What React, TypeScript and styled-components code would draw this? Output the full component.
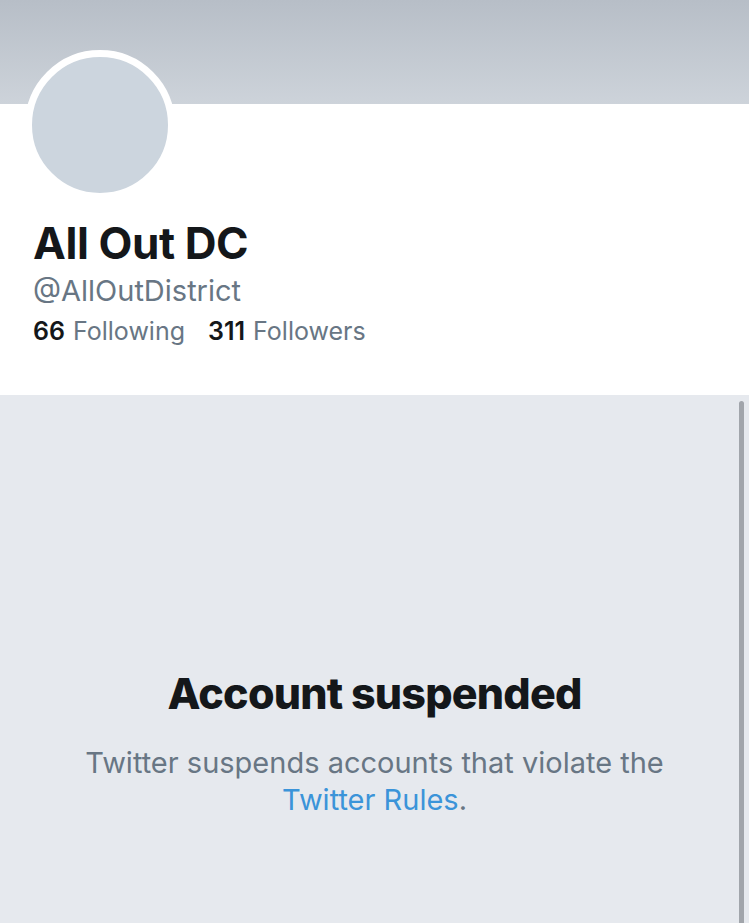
import React from 'react';
import styled, { createGlobalStyle } from 'styled-components';

const GlobalStyle = createGlobalStyle`
  html, body {
    margin: 0;
    padding: 0;
    background: #e6e9ee;
  }
  body {
    font-family: Inter, "Liberation Sans", Arial, sans-serif;
    -webkit-font-smoothing: antialiased;
  }
`;

const Page = styled.div`
  width: 749px;
  height: 923px;
  display: flex;
  flex-direction: column;
  overflow: hidden;
`;

const Banner = styled.div`
  height: 104px;
  flex-shrink: 0;
  background: linear-gradient(180deg, #b7bec7 0%, #cdd3da 100%);
`;

const Profile = styled.div`
  background: #ffffff;
  padding: 0 0 0 33px;
  height: 291px;
  flex-shrink: 0;
  display: flex;
  flex-direction: column;
`;

const Avatar = styled.div`
  width: 136px;
  height: 136px;
  margin: -54px 0 0 -8px;
  border-radius: 50%;
  border: 7px solid #ffffff;
  background: #ccd5de;
`;

const Name = styled.h1`
  margin: 17px 0 0;
  font-size: 44px;
  line-height: 52px;
  font-weight: 700;
  color: #14171a;
  letter-spacing: -0.4px;
`;

const Handle = styled.div`
  margin-top: 3px;
  font-size: 29px;
  line-height: 38px;
  color: #687684;
`;

const Stats = styled.div`
  margin-top: 5px;
  display: flex;
  gap: 23px;
  font-size: 25px;
  line-height: 32px;
`;

const Stat = styled.span`
  color: #687684;
`;

const Count = styled.b`
  color: #14171a;
  font-weight: 600;
  margin-right: 8px;
`;

const Suspended = styled.div`
  position: relative;
  flex: 1;
  background: #e6e9ee;
  display: flex;
  flex-direction: column;
  align-items: center;
  padding-top: 272px;
  text-align: center;
`;

const Title = styled.h2`
  margin: 0;
  font-size: 43px;
  line-height: 52px;
  font-weight: 800;
  color: #14171a;
  letter-spacing: -0.8px;
`;

const Message = styled.p`
  margin: 25px 0 0;
  max-width: 640px;
  font-size: 29px;
  line-height: 37px;
  color: #687684;
`;

const RulesLink = styled.a`
  color: #3b94d9;
  text-decoration: none;
`;

const Scrollbar = styled.div`
  position: absolute;
  top: 6px;
  bottom: 0;
  right: 5px;
  width: 5px;
  border-radius: 3px 3px 0 0;
  background: #a1a5ab;
`;

export default function App() {
  return (
    <Page>
      <GlobalStyle />
      <Banner />
      <Profile>
        <Avatar />
        <Name>All Out DC</Name>
        <Handle>@AllOutDistrict</Handle>
        <Stats>
          <Stat><Count>66</Count>Following</Stat>
          <Stat><Count>311</Count>Followers</Stat>
        </Stats>
      </Profile>
      <Suspended>
        <Title>Account suspended</Title>
        <Message>
          Twitter suspends accounts that violate the{' '}
          <RulesLink href="#">Twitter Rules</RulesLink>.
        </Message>
        <Scrollbar />
      </Suspended>
    </Page>
  );
}
